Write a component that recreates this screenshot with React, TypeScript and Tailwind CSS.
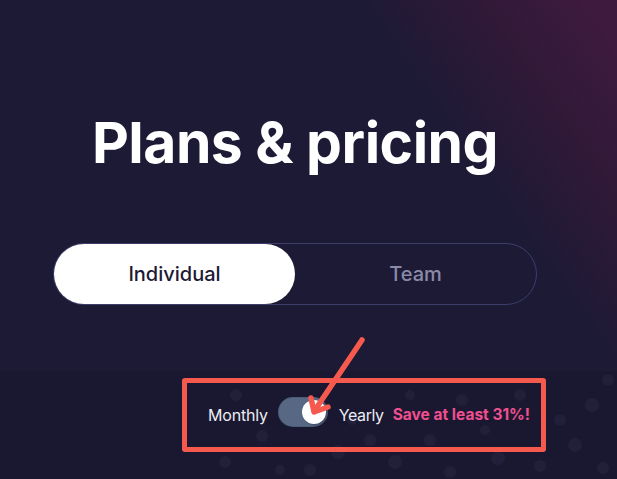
import React from "react";

const dots: Array<[number, number, number]> = [
  [236, 395, 6], [262, 436, 6], [338, 452, 7], [395, 462, 7], [430, 440, 6],
  [462, 400, 6], [498, 458, 7], [540, 466, 6], [575, 445, 7], [592, 405, 7],
  [608, 380, 6], [560, 420, 6], [310, 470, 6], [352, 420, 5], [450, 472, 6],
  [225, 462, 6], [280, 470, 5], [520, 395, 6], [603, 468, 6], [410, 395, 5],
  [370, 440, 6], [485, 430, 5],
];

function Switch({ on }: { on: boolean }) {
  return (
    <button
      type="button"
      className="relative h-[30px] w-[50px] rounded-full bg-[#566884] shadow-[inset_0_0_0_1px_rgba(0,0,0,0.1)]"
    >
      <span
        className={
          on
            ? "absolute right-[2px] top-[3px] h-[24px] w-[24px] rounded-full bg-white shadow-[1px_1px_2px_rgba(0,0,0,0.3)]"
            : "absolute left-[2px] top-[3px] h-[24px] w-[24px] rounded-full bg-white"
        }
      />
    </button>
  );
}

export default function App() {
  const [tab, setTab] = React.useState<"individual" | "team">("individual");
  const [yearly, setYearly] = React.useState(true);

  return (
    <div className="relative h-[479px] w-full overflow-hidden bg-[#1c1a35] font-['Inter',sans-serif]">
      <div className="flex h-[371px] flex-col bg-[linear-gradient(55deg,#1c1a35_70%,#301938_84%,#3d1a3e_96%)] pl-[53px]">
        <h1 className="mt-[110px] w-[484px] text-center text-[57px] font-bold leading-[66px] tracking-[-0.5px] text-white">
          Plans &amp; pricing
        </h1>
        <div className="mt-[67px] flex h-[62px] w-[484px] rounded-full border-[1.5px] border-[#3c3d6c]">
          <button
            type="button"
            onClick={() => setTab("individual")}
            className={
              tab === "individual"
                ? "flex-1 rounded-full bg-white text-[20px] font-medium text-[#1c1a35]"
                : "flex-1 rounded-full text-[20px] font-medium text-[#8b8ba8]"
            }
          >
            Individual
          </button>
          <button
            type="button"
            onClick={() => setTab("team")}
            className={
              tab === "team"
                ? "flex-1 rounded-full bg-white text-[20px] font-medium text-[#1c1a35]"
                : "flex-1 rounded-full text-[20px] font-medium text-[#8b8ba8]"
            }
          >
            Team
          </button>
        </div>
      </div>

      <div className="relative h-[108px] bg-[#1a1830] pl-[182px] pt-[7px]">
        <svg className="absolute inset-0 h-full w-full" viewBox="0 371 617 108">
          {dots.map(([cx, cy, r], i) => (
            <circle key={i} cx={cx} cy={cy} r={r} fill="#221f3a" />
          ))}
        </svg>
        <div className="relative flex h-[74px] w-[364px] items-center rounded-[3px] border-[5px] border-[#f65a4e] pl-[21px]">
          <span className="text-[16px] tracking-[-0.2px] text-[#ececf3]">Monthly</span>
          <span className="ml-[10px]" onClick={() => setYearly(!yearly)}>
            <Switch on={yearly} />
          </span>
          <span className="ml-[11px] text-[16px] tracking-[-0.4px] text-[#ececf3]">Yearly</span>
          <span className="ml-[9px] text-[15.5px] font-bold text-[#ef4f8f]">
            Save at least 31%!
          </span>
        </div>
      </div>

      {/* annotation arrow */}
      <svg
        className="pointer-events-none absolute left-0 top-0"
        width="617"
        height="479"
      >
        <g stroke="#f65a4e" strokeWidth="5.5" strokeLinecap="round" strokeLinejoin="round" fill="none">
          <line x1="362" y1="340" x2="315" y2="410" />
          <polyline points="311,398 314,412 328,407" />
        </g>
      </svg>
    </div>
  );
}
